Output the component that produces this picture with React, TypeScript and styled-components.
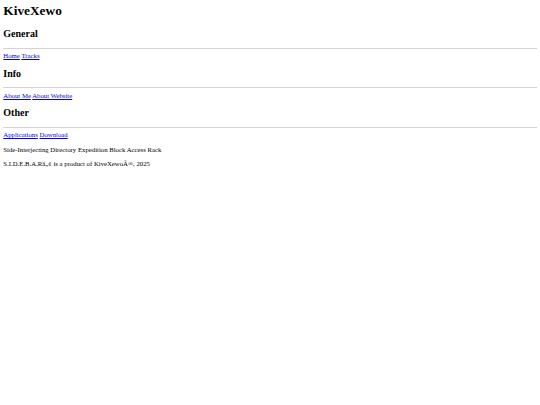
import React from "react";
import styled, { createGlobalStyle } from "styled-components";

// the reference is a default-styled page shrunk to 540/1296 of its size
const Global = createGlobalStyle`
  html, body {
    background: #ffffff;
  }
  body {
    margin: 3.333px;
    font-family: "Liberation Serif", "Times New Roman", serif;
    font-size: 6.75px;
    color: #000000;
  }
`;

const Title = styled("h1")`
  font-size: 13.333px;
  font-weight: bold;
  margin: 0 0 9px;
`;

const SectionTitle = styled("h2")`
  font-size: 10px;
  font-weight: bold;
  margin: 8.5px 0;
`;

const Rule = styled("hr")`
  margin: 3.5px 0;
  height: 0;
  border: none;
  border-top: 1px solid #d4d4d4;
`;

const LinkRow = styled("nav")`
  display: block;
`;

const Link = styled("a")`
  color: #0000ee;
  text-decoration: underline;
`;

const Note = styled("p")`
  margin: 7.2px 0;
`;

const sections = [
  { title: "General", links: ["Home", "Tracks"] },
  { title: "Info", links: ["About Me", "About Website"] },
  { title: "Other", links: ["Applications", "Download"] },
];

export default function App() {
  return (
    <>
      <Global />
      <Title>KiveXewo</Title>
      {sections.map((section) => (
        <section key={section.title}>
          <SectionTitle>{section.title}</SectionTitle>
          <Rule />
          <LinkRow>
            {section.links.map((label, i) => (
              <React.Fragment key={label}>
                {i > 0 && " "}
                <Link href="#">{label}</Link>
              </React.Fragment>
            ))}
          </LinkRow>
        </section>
      ))}
      <Note>Side-Interjecting Directory Expedition Block Access Rack</Note>
      <Note>S.I.D.E.B.A.Râ„¢ is a product of KiveXewoÂ®, 2025</Note>
    </>
  );
}
